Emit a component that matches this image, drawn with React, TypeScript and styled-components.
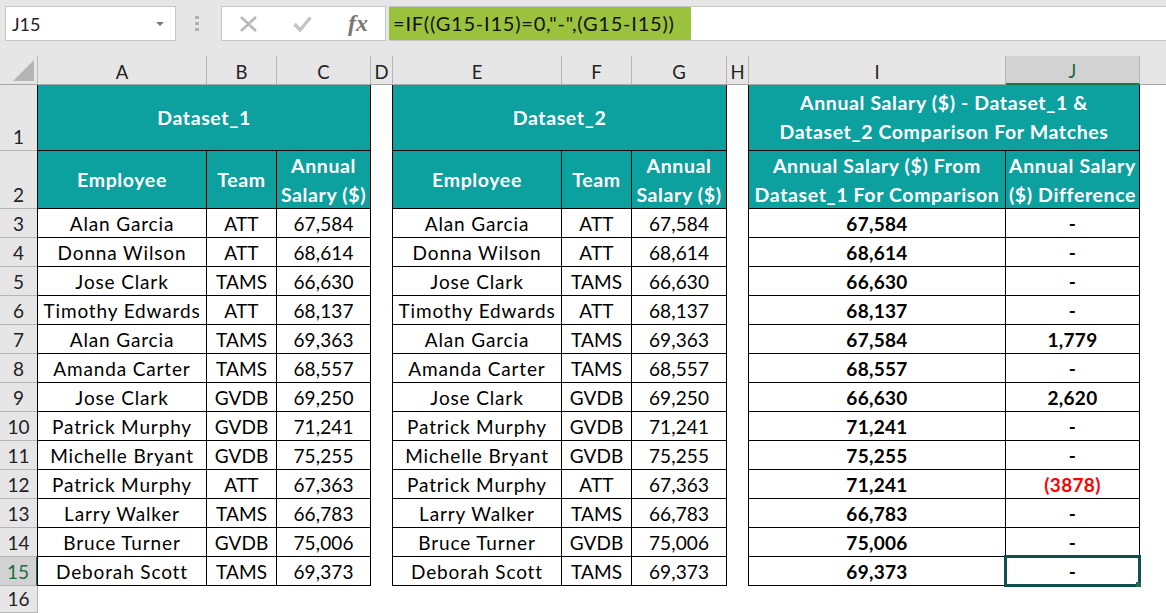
import styled, { createGlobalStyle } from 'styled-components';

const GlobalStyle = createGlobalStyle`
  html, body {
    margin: 0;
    padding: 0;
    background: #ffffff;
    overflow: hidden;
  }
  body {
    font-family: Lato, "Liberation Sans", sans-serif;
  }
`;

const Page = styled.div`
  width: 1166px;
  height: 613px;
  overflow: hidden;
  display: flex;
  flex-direction: column;
`;

const FormulaRow = styled.div`
  height: 56px;
  box-sizing: border-box;
  padding: 6px 0 15px 5px;
  background: #e6e6e6;
  display: flex;
`;

const NameBox = styled.div`
  width: 171px;
  box-sizing: border-box;
  background: #fff;
  border: 1px solid #c6c6c6;
  display: flex;
  align-items: center;
  justify-content: space-between;
  padding: 0 11px 0 6px;
  font-size: 18px;
  color: #222;
`;

const Caret = styled.span`
  width: 0;
  height: 0;
  border-left: 4px solid transparent;
  border-right: 4px solid transparent;
  border-top: 4px solid #7a7a7a;
`;

const Grip = styled.div`
  width: 45px;
  box-sizing: border-box;
  padding-right: 3px;
  display: flex;
  flex-direction: column;
  align-items: center;
  justify-content: center;
  gap: 3px;
`;

const GripDot = styled.span`
  width: 4px;
  height: 3px;
  background: #b1b1b1;
`;

const ButtonBox = styled.div`
  width: 165px;
  box-sizing: border-box;
  background: #fff;
  border: 1px solid #c6c6c6;
  display: flex;
  align-items: center;
  padding-left: 18px;
  gap: 36px;
`;

const FxLabel = styled.span`
  font-family: "Liberation Serif", serif;
  font-style: italic;
  font-weight: 700;
  font-size: 24px;
  color: #777;
`;

const FormulaInput = styled.div`
  flex: 1;
  margin-left: 3px;
  background: #fff;
  border-top: 1px solid #c6c6c6;
  border-bottom: 1px solid #c6c6c6;
  display: flex;
`;

const FormulaText = styled.span`
  width: 302px;
  box-sizing: border-box;
  background: #9bc23c;
  color: #111;
  font-size: 20px;
  letter-spacing: 0.78px;
  line-height: 32px;
  padding-left: 4px;
  white-space: nowrap;
`;

const Sheet = styled.div`
  display: grid;
  grid-template-columns: 38px 169px 70px 94px 22px 169px 70px 95px 22px 257px 134px 26px;
  grid-template-rows: 29px 66px 58px repeat(13, 29px) 27px;
  background: #fff;
`;

const Corner = styled.div`
  background: #e6e6e6;
  border-right: 1px solid #b5b5b5;
  border-bottom: 1px solid #a6a6a6;
  display: flex;
  align-items: flex-end;
  justify-content: flex-end;
  padding: 0 3px 3px 0;
`;

const ColHead = styled.div<{ $selected?: boolean }>`
  box-sizing: border-box;
  background: ${p => (p.$selected ? '#d2d2d2' : '#e6e6e6')};
  border-right: 1px solid #b5b5b5;
  border-bottom: ${p => (p.$selected ? '2px solid #217346' : '1px solid #a6a6a6')};
  color: ${p => (p.$selected ? '#1d6b41' : '#222')};
  font-size: 18.5px;
  display: flex;
  align-items: center;
  justify-content: center;
  padding-top: 3px;
`;

const HeadFiller = styled.div`
  background: #e6e6e6;
  border-bottom: 1px solid #a6a6a6;
`;

const RowHead = styled.div<{ $selected?: boolean }>`
  box-sizing: border-box;
  background: ${p => (p.$selected ? '#d2d2d2' : '#e6e6e6')};
  border-right: ${p => (p.$selected ? '2px solid #217346' : '1px solid #b5b5b5')};
  border-bottom: 1px solid #b5b5b5;
  color: ${p => (p.$selected ? '#1d6b41' : '#222')};
  font-size: 19px;
  line-height: 27px;
  display: flex;
  align-items: flex-end;
  justify-content: center;
`;

const Gap = styled.div`
  background: #fff;
`;

const Head = styled.div<{ $span?: number; $first?: boolean; $raised?: boolean }>`
  grid-column: span ${p => p.$span ?? 1};
  box-sizing: border-box;
  background: #0ca09f;
  color: #fff;
  font-weight: 700;
  font-size: 19.5px;
  letter-spacing: 0.62px;
  line-height: 29px;
  text-align: center;
  display: flex;
  align-items: center;
  justify-content: center;
  white-space: pre-line;
  padding-bottom: ${p => (p.$raised ? '2px' : '0')};
  border-right: 1px solid #000;
  border-bottom: 1px solid #000;
  ${p => (p.$first ? 'border-left: 1px solid #000; margin-left: -1px;' : '')}
`;

const Cell = styled.div<{ $first?: boolean; $bold?: boolean; $red?: boolean; $name?: boolean }>`
  position: relative;
  box-sizing: border-box;
  color: ${p => (p.$red ? '#ff0000' : '#000')};
  font-weight: ${p => (p.$bold ? 700 : 400)};
  font-size: 19px;
  letter-spacing: ${p => (p.$name ? '0.85px' : p.$bold ? '0.3px' : '0.1px')};
  line-height: 30px;
  text-align: center;
  white-space: nowrap;
  border-right: 1px solid #000;
  border-bottom: 1px solid #000;
  ${p => (p.$first ? 'border-left: 1px solid #000; margin-left: -1px;' : '')}
`;

const Selection = styled.div`
  position: absolute;
  inset: -2px -2px -2px -2px;
  border: 3px solid #0f4f4f;
`;

const FillHandle = styled.span`
  position: absolute;
  right: -3px;
  bottom: -3px;
  width: 5px;
  height: 5px;
  background: #1f6b4a;
`;

type RowData = [string, string, string, string, string, string, string, string];

const rows: RowData[] = [
  ['Alan Garcia', 'ATT', '67,584', 'Alan Garcia', 'ATT', '67,584', '67,584', '-'],
  ['Donna Wilson', 'ATT', '68,614', 'Donna Wilson', 'ATT', '68,614', '68,614', '-'],
  ['Jose Clark', 'TAMS', '66,630', 'Jose Clark', 'TAMS', '66,630', '66,630', '-'],
  ['Timothy Edwards', 'ATT', '68,137', 'Timothy Edwards', 'ATT', '68,137', '68,137', '-'],
  ['Alan Garcia', 'TAMS', '69,363', 'Alan Garcia', 'TAMS', '69,363', '67,584', '1,779'],
  ['Amanda Carter', 'TAMS', '68,557', 'Amanda Carter', 'TAMS', '68,557', '68,557', '-'],
  ['Jose Clark', 'GVDB', '69,250', 'Jose Clark', 'GVDB', '69,250', '66,630', '2,620'],
  ['Patrick Murphy', 'GVDB', '71,241', 'Patrick Murphy', 'GVDB', '71,241', '71,241', '-'],
  ['Michelle Bryant', 'GVDB', '75,255', 'Michelle Bryant', 'GVDB', '75,255', '75,255', '-'],
  ['Patrick Murphy', 'ATT', '67,363', 'Patrick Murphy', 'ATT', '67,363', '71,241', '(3878)'],
  ['Larry Walker', 'TAMS', '66,783', 'Larry Walker', 'TAMS', '66,783', '66,783', '-'],
  ['Bruce Turner', 'GVDB', '75,006', 'Bruce Turner', 'GVDB', '75,006', '75,006', '-'],
  ['Deborah Scott', 'TAMS', '69,373', 'Deborah Scott', 'TAMS', '69,373', '69,373', '-'],
];

const columns = ['A', 'B', 'C', 'D', 'E', 'F', 'G', 'H', 'I', 'J'];

function Row({ num, row }: { num: number; row: RowData }) {
  const last = num === 15;
  return (
    <>
      <RowHead $selected={last}>{num}</RowHead>
      <Cell $first $name>
        {row[0]}
      </Cell>
      <Cell>{row[1]}</Cell>
      <Cell>{row[2]}</Cell>
      <Gap />
      <Cell $first $name>
        {row[3]}
      </Cell>
      <Cell>{row[4]}</Cell>
      <Cell>{row[5]}</Cell>
      <Gap />
      <Cell $first $bold>
        {row[6]}
      </Cell>
      <Cell $bold $red={row[7].startsWith('(')}>
        {row[7]}
        {last && (
          <Selection>
            <FillHandle />
          </Selection>
        )}
      </Cell>
      <Gap />
    </>
  );
}

export default function App() {
  return (
    <Page>
      <GlobalStyle />
      <FormulaRow>
        <NameBox>
          J15
          <Caret />
        </NameBox>
        <Grip>
          <GripDot />
          <GripDot />
          <GripDot />
        </Grip>
        <ButtonBox>
          <svg width="17" height="16" viewBox="0 0 17 16">
            <path d="M1 1 L16 15 M16 1 L1 15" stroke="#b9b9b9" strokeWidth="2.6" fill="none" />
          </svg>
          <svg width="19" height="16" viewBox="0 0 19 16">
            <path d="M1.5 8 L7 14 L17.5 1.5" stroke="#c4c4c4" strokeWidth="3.4" fill="none" />
          </svg>
          <FxLabel>fx</FxLabel>
        </ButtonBox>
        <FormulaInput>
          <FormulaText>=IF((G15-I15)=0,"-",(G15-I15))</FormulaText>
        </FormulaInput>
      </FormulaRow>

      <Sheet>
        <Corner>
          <svg width="21" height="21" viewBox="0 0 21 21">
            <polygon points="21,0 21,21 0,21" fill="#b4b4b4" />
          </svg>
        </Corner>
        {columns.map(c => (
          <ColHead key={c} $selected={c === 'J'}>
            {c}
          </ColHead>
        ))}
        <HeadFiller />

        <RowHead>1</RowHead>
        <Head $span={3} $first>
          Dataset_1
        </Head>
        <Gap />
        <Head $span={3} $first>
          Dataset_2
        </Head>
        <Gap />
        <Head $span={2} $first $raised>
          {'Annual Salary ($) - Dataset_1 &\nDataset_2 Comparison For Matches'}
        </Head>
        <Gap />

        <RowHead>2</RowHead>
        <Head $first>Employee</Head>
        <Head>Team</Head>
        <Head>{'Annual\nSalary ($)'}</Head>
        <Gap />
        <Head $first>Employee</Head>
        <Head>Team</Head>
        <Head>{'Annual\nSalary ($)'}</Head>
        <Gap />
        <Head $first>{'Annual Salary ($) From\nDataset_1 For Comparison'}</Head>
        <Head>{'Annual Salary\n($) Difference'}</Head>
        <Gap />

        {rows.map((r, i) => (
          <Row key={i} num={i + 3} row={r} />
        ))}

        <RowHead>16</RowHead>
      </Sheet>
    </Page>
  );
}
